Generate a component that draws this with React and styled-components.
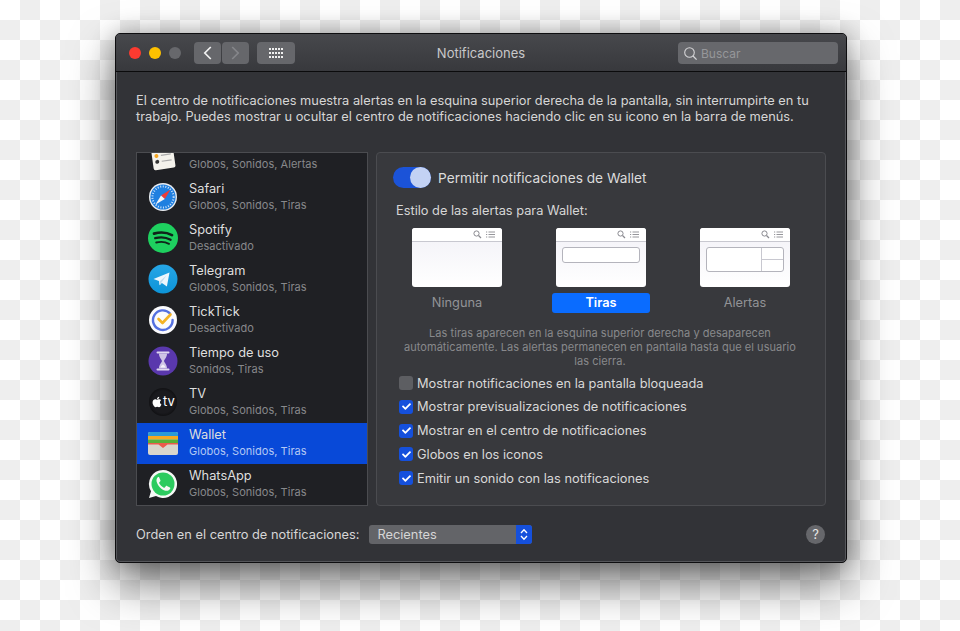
import styled, { createGlobalStyle } from "styled-components";
import { FaApple, FaCheck } from "react-icons/fa";

const GlobalStyle = createGlobalStyle`
	html, body {
		margin: 0;
		height: 631px;
		overflow: hidden;
	}
	body {
		font-family: Inter, "Noto Sans", sans-serif;
		background: conic-gradient(#eeeeee 25%, #ffffff 0 50%, #eeeeee 0 75%, #ffffff 0) 0 0 / 40px 40px;
		-webkit-font-smoothing: antialiased;
	}
`;

function RemindersIcon() {
	return (
		<svg width="32" height="32" viewBox="0 0 32 32">
			<g transform="rotate(-8 16 16)">
				<rect x="5" y="3" width="22" height="26" rx="2" fill="#f4f2ec" />
				<circle cx="9.5" cy="9" r="2" fill="#e8392f" />
				<circle cx="9.5" cy="15" r="2" fill="#f5a623" />
				<circle cx="9.5" cy="21" r="2" fill="#333" />
				<path d="M14 9h10M14 15h10M14 21h10" stroke="#aaa" strokeWidth="1.2" />
			</g>
		</svg>
	);
}

function SafariIcon() {
	return (
		<svg width="32" height="32" viewBox="0 0 32 32">
			<circle cx="16" cy="16" r="14" fill="#e9edf2" />
			<circle cx="16" cy="16" r="12.6" fill="#1f7fe0" />
			<circle cx="16" cy="16" r="10.6" fill="none" stroke="#cfe4fa" strokeWidth="2" strokeDasharray="1 1.6" />
			<path d="M23.5 8.500l-9.500 6 3.800 3.500z" fill="#ef3b36" />
			<path d="M8.500 23.500l9.300-5.500-3.800-3.500z" fill="#f2f4f7" />
		</svg>
	);
}

function SpotifyIcon() {
	return (
		<svg width="32" height="32" viewBox="0 0 32 32">
			<circle cx="16" cy="16" r="15" fill="#1ed05f" />
			<g fill="none" stroke="#10231a" strokeLinecap="round">
				<path d="M7 11.6c6-1.7 13-1.2 18 1.5" strokeWidth="2.7" />
				<path d="M8.2 16.2c5.2-1.4 11-.9 15.4 1.5" strokeWidth="2.3" />
				<path d="M9.2 20.5c4.500-1.100 9.200-.7 12.800 1.300" strokeWidth="1.9" />
			</g>
		</svg>
	);
}

function TelegramIcon() {
	return (
		<svg width="32" height="32" viewBox="0 0 32 32">
			<defs>
				<linearGradient id="tg" x1="0" y1="0" x2="0" y2="1">
					<stop offset="0" stopColor="#26a6e6" />
					<stop offset="1" stopColor="#0d94d8" />
				</linearGradient>
			</defs>
			<circle cx="16" cy="16" r="14.5" fill="url(#tg)" />
			<path d="M6.5 16l16-6.5-2.600 14-5-3.600-2.400 2.400-.6-4.400z" fill="#eef7fd" />
			<path d="M12.500 18.400l7-6-5 7.200-1.400 2.300z" fill="#c4dcec" />
		</svg>
	);
}

function TickTickIcon() {
	return (
		<svg width="32" height="32" viewBox="0 0 32 32">
			<circle cx="16" cy="16" r="14" fill="#fbfbfd" />
			<path d="M23 9.500A9.800 9.800 0 1 0 25.600 16" fill="none" stroke="#5470e0" strokeWidth="2.400" strokeLinecap="round" />
			<path d="M11.500 15l4 4 8-8.500" fill="none" stroke="#f4b324" strokeWidth="2.600" strokeLinecap="round" strokeLinejoin="round" />
		</svg>
	);
}

function HourglassIcon() {
	return (
		<svg width="32" height="32" viewBox="0 0 32 32">
			<circle cx="16" cy="16" r="14.500" fill="#5a38ad" />
			<path d="M10.500 7.500h11M10.500 24.500h11" stroke="#e0d8f0" strokeWidth="2" strokeLinecap="round" />
			<path d="M12 8.500h8c0 4-2.400 5.500-3 7.500.6 2 3 3.500 3 7.500h-8c0-4 2.400-5.500 3-7.500-.6-2-3-3.500-3-7.500z" fill="#cfc4e6" />
			<path d="M13.500 22.500c.8-2 1.700-2.500 2.500-3 .8.500 1.700 1 2.500 3z" fill="#f4f0fa" />
		</svg>
	);
}

function WalletIcon() {
	return (
		<svg width="32" height="32" viewBox="0 0 32 32">
			<rect x="1" y="5" width="30" height="23" rx="2" fill="#d9d6cc" />
			<path d="M1 7a2 2 0 0 1 2-2h26a2 2 0 0 1 2 2v2H1z" fill="#2b9ad6" />
			<rect x="1" y="9" width="30" height="3.500" fill="#f5a921" />
			<rect x="1" y="12.500" width="30" height="3.500" fill="#58b038" />
			<path d="M1 16h30v1.500H20.500L16 21l-4.500-3.500H1z" fill="#ec5b4b" />
		</svg>
	);
}

function WhatsAppIcon() {
	return (
		<svg width="32" height="32" viewBox="0 0 32 32">
			<path d="M16 2a14 14 0 0 0-12 21.200L2 30l7-1.900A14 14 0 1 0 16 2z" fill="#f6f8f6" />
			<circle cx="16" cy="16" r="11.500" fill="#2ccb5f" />
			<path d="M11.500 8.800c-1.500 1-2.400 2.600-1.900 4.700 1 4.200 4.800 8.200 8.800 9.200 2.200.5 4-.5 4.800-2 .3-.6.200-1-.3-1.300l-3-1.500c-.5-.2-.8-.1-1.100.3l-1 1.300c-.3.300-.6.400-1 .2-2-.9-3.700-2.500-4.600-4.400-.2-.4-.1-.7.200-1l.9-1c.3-.4.3-.7.100-1.100l-1.300-3c-.2-.5-.9-.7-1.600-.4z" fill="#f6f8f6" />
		</svg>
	);
}

function TvIcon() {
	return (
		<TvBadge>
			<FaApple size={12} />
			<span>tv</span>
		</TvBadge>
	);
}

const apps = [
	{ id: "reminders", detail: "Globos, Sonidos, Alertas", Icon: RemindersIcon },
	{ id: "safari", name: "Safari", detail: "Globos, Sonidos, Tiras", Icon: SafariIcon },
	{ id: "spotify", name: "Spotify", detail: "Desactivado", Icon: SpotifyIcon },
	{ id: "telegram", name: "Telegram", detail: "Globos, Sonidos, Tiras", Icon: TelegramIcon },
	{ id: "ticktick", name: "TickTick", detail: "Desactivado", Icon: TickTickIcon },
	{ id: "screentime", name: "Tiempo de uso", detail: "Sonidos, Tiras", Icon: HourglassIcon },
	{ id: "tv", name: "TV", detail: "Globos, Sonidos, Tiras", Icon: TvIcon },
	{ id: "wallet", name: "Wallet", detail: "Globos, Sonidos, Tiras", Icon: WalletIcon, selected: true },
	{ id: "whatsapp", name: "WhatsApp", detail: "Globos, Sonidos, Tiras", Icon: WhatsAppIcon },
];

const options = [
	{ label: "Mostrar notificaciones en la pantalla bloqueada", checked: false },
	{ label: "Mostrar previsualizaciones de notificaciones", checked: true },
	{ label: "Mostrar en el centro de notificaciones", checked: true },
	{ label: "Globos en los iconos", checked: true },
	{ label: "Emitir un sonido con las notificaciones", checked: true },
];

function Thumb({ kind }) {
	return (
		<ThumbBox>
			<ThumbBar>
				<svg width="24" height="9" viewBox="0 0 24 9">
					<circle cx="3.500" cy="3.500" r="2.600" fill="none" stroke="#8a8a90" strokeWidth="1" />
					<path d="M5.500 5.500L8 8" stroke="#8a8a90" strokeWidth="1.200" />
					<path d="M13 2h1.200M13 4.500h1.200M13 7h1.200M15.500 2H22M15.500 4.500H22M15.500 7H22" stroke="#8a8a90" strokeWidth="0.900" />
				</svg>
			</ThumbBar>
			{kind === "banner" && <Banner />}
			{kind === "alert" && (
				<AlertBox>
					<AlertMain />
					<AlertSide>
						<AlertAction />
						<AlertAction />
					</AlertSide>
				</AlertBox>
			)}
		</ThumbBox>
	);
}

export default function App() {
	return (
		<>
			<GlobalStyle />
			<Window>
				<TitleBar>
					<Light $color="#fc3a30" />
					<Light $color="#fdc100" />
					<Light $color="#67686c" />
					<NavGroup>
						<ToolButton>
							<svg width="9" height="14" viewBox="0 0 9 14">
								<path d="M7.800 1L1.800 7l6 6" fill="none" stroke="#f2f2f2" strokeWidth="1.700" />
							</svg>
						</ToolButton>
						<ToolButton>
							<svg width="9" height="14" viewBox="0 0 9 14">
								<path d="M1.200 1l6 6-6 6" fill="none" stroke="#85868a" strokeWidth="1.700" />
							</svg>
						</ToolButton>
					</NavGroup>
					<GridButton>
						<GridDots>
							{Array.from({ length: 15 }).map((_, i) => (
								<i key={i} />
							))}
						</GridDots>
					</GridButton>
					<Title>Notificaciones</Title>
					<Search>
						<svg width="15" height="15" viewBox="0 0 15 15">
							<circle cx="6.500" cy="6.500" r="4.800" fill="none" stroke="#d4d4d6" strokeWidth="1.100" />
							<path d="M10 10l3.600 3.600" stroke="#d4d4d6" strokeWidth="1.300" />
						</svg>
						<span>Buscar</span>
					</Search>
				</TitleBar>

				<Content>
					<Intro>
						El centro de notificaciones muestra alertas en la esquina superior derecha de la pantalla, sin
						interrumpirte en tu trabajo. Puedes mostrar u ocultar el centro de notificaciones haciendo clic en su
						icono en la barra de menús.
					</Intro>

					<Columns>
						<AppList>
							<AppScroll>
								{apps.map(({ id, name, detail, Icon, selected }) => (
									<AppRow key={id} $selected={selected}>
										<IconSlot>
											<Icon />
										</IconSlot>
										<AppText>
											<AppName>{name}</AppName>
											<AppDetail $selected={selected}>{detail}</AppDetail>
										</AppText>
									</AppRow>
								))}
							</AppScroll>
						</AppList>

						<Panel>
							<AllowRow>
								<Toggle />
								<AllowLabel>Permitir notificaciones de Wallet</AllowLabel>
							</AllowRow>
							<StyleHeading>Estilo de las alertas para Wallet:</StyleHeading>
							<Styles>
								<StyleOption>
									<Thumb />
									<StyleLabel>Ninguna</StyleLabel>
								</StyleOption>
								<StyleOption>
									<Thumb kind="banner" />
									<StyleLabel $active>Tiras</StyleLabel>
								</StyleOption>
								<StyleOption>
									<Thumb kind="alert" />
									<StyleLabel>Alertas</StyleLabel>
								</StyleOption>
							</Styles>
							<Hint>
								Las tiras aparecen en la esquina superior derecha y desaparecen automáticamente. Las alertas
								permanecen en pantalla hasta que el usuario las cierra.
							</Hint>
							<OptionList>
								{options.map((option) => (
									<OptionRow key={option.label}>
										<CheckBox $checked={option.checked}>
											{option.checked && <FaCheck size={9} color="#fff" />}
										</CheckBox>
										{option.label}
									</OptionRow>
								))}
							</OptionList>
						</Panel>
					</Columns>

					<Footer>
						<span>Orden en el centro de notificaciones:</span>
						<Select>
							<span>Recientes</span>
							<SelectCap>
								<svg width="8" height="13" viewBox="0 0 8 13">
									<path d="M1 5l3-3.200L7 5M1 8l3 3.200L7 8" fill="none" stroke="#fff" strokeWidth="1.300" />
								</svg>
							</SelectCap>
						</Select>
						<HelpButton>?</HelpButton>
					</Footer>
				</Content>
			</Window>
		</>
	);
}

const Window = styled.div`
	box-sizing: border-box;
	width: 732px;
	height: 530px;
	margin: 33px 0 0 115px;
	display: flex;
	flex-direction: column;
	background: #323337;
	border-radius: 5px;
	border: 1px solid #0e0e10;
	box-shadow: inset 0 0 0 1px #55565a, 0 20px 45px rgba(0, 0, 0, 0.55), 0 0 22px rgba(0, 0, 0, 0.25);
	color: #dcdcdc;
	overflow: hidden;
`;

const TitleBar = styled.div`
	flex: none;
	box-sizing: border-box;
	height: 38px;
	display: flex;
	align-items: center;
	padding: 1px 8px 0 13px;
	background: linear-gradient(#47484c, #38393d);
	border-bottom: 1px solid #0b0b0c;
	position: relative;
`;

const Light = styled.span`
	width: 12px;
	height: 12px;
	border-radius: 50%;
	background: ${(p) => p.$color};
	margin-right: 8px;
`;

const NavGroup = styled.div`
	display: flex;
	gap: 1px;
	margin-left: 5px;
`;

const ToolButton = styled.div`
	width: 27px;
	height: 22px;
	display: flex;
	align-items: center;
	justify-content: center;
	background: #66676b;
	border-radius: 4px;
`;

const GridButton = styled(ToolButton)`
	width: 38px;
	margin-left: 8px;
`;

const GridDots = styled.div`
	display: grid;
	grid-template-columns: repeat(5, 2px);
	column-gap: 1px;
	row-gap: 2px;

	i {
		width: 2px;
		height: 2px;
		background: #f0f0f0;
	}
`;

const Title = styled.div`
	position: absolute;
	left: 0;
	right: 0;
	text-align: center;
	font-size: 13px;
	color: #c8c8ca;
	pointer-events: none;
`;

const Search = styled.div`
	width: 160px;
	height: 22px;
	margin-left: auto;
	box-sizing: border-box;
	padding-left: 5px;
	display: flex;
	align-items: center;
	gap: 3px;
	background: #67686c;
	border-radius: 4px;
	font-size: 12px;
	color: #96979a;
`;

const Content = styled.div`
	flex: 1;
	min-height: 0;
	display: flex;
	flex-direction: column;
	padding: 21px 20px 0;
`;

const Intro = styled.p`
	margin: 0;
	height: 59px;
	font-size: 12.800px;
	line-height: 16px;
	color: #d6d6d6;
`;

const Columns = styled.div`
	display: flex;
	gap: 8px;
`;

const AppList = styled.div`
	box-sizing: border-box;
	width: 232px;
	height: 354px;
	background: #1f2024;
	border: 1px solid #4b4c50;
	overflow: hidden;
`;

const AppScroll = styled.div`
	margin-top: -17px;
`;

const AppRow = styled.div`
	box-sizing: border-box;
	height: 41px;
	padding-bottom: 2px;
	display: flex;
	align-items: center;
	background: ${(p) => (p.$selected ? "#0849d8" : "transparent")};
`;

const IconSlot = styled.div`
	width: 32px;
	height: 32px;
	margin-left: 10px;
	flex: none;
	display: flex;
`;

const TvBadge = styled.div`
	width: 28px;
	height: 28px;
	margin: 2px;
	border-radius: 50%;
	background: radial-gradient(circle, #1a1a1e 55%, #000);
	display: flex;
	align-items: center;
	justify-content: center;
	color: #fff;
	font-size: 13px;
	font-weight: 400;

	span {
		line-height: 1;
	}
`;

const AppText = styled.div`
	margin-left: 10px;
	display: flex;
	flex-direction: column;
`;

const AppName = styled.div`
	min-height: 17px;
	font-size: 12.800px;
	line-height: 17px;
	color: #dedede;
`;

const AppDetail = styled.div`
	font-size: 11px;
	letter-spacing: 0.03px;
	line-height: 16px;
	color: ${(p) => (p.$selected ? "#b3c8f4" : "#87888b")};
`;

const Panel = styled.div`
	box-sizing: border-box;
	width: 450px;
	height: 354px;
	padding: 14px 16px 0 16px;
	background: #38393d;
	border: 1px solid #4b4c50;
	border-radius: 4px;
`;

const AllowRow = styled.div`
	display: flex;
	align-items: center;
	gap: 7px;
	font-size: 13.700px;
`;

const AllowLabel = styled.span`
	color: #dcdcdc;
`;

const Toggle = styled.div`
	width: 38px;
	height: 21px;
	border-radius: 11px;
	background: #1b53d8;
	position: relative;

	&::after {
		content: "";
		position: absolute;
		right: 0;
		top: 0;
		width: 21px;
		height: 21px;
		border-radius: 50%;
		background: #c3d2f4;
	}
`;

const StyleHeading = styled.div`
	margin: 13px 0 0 3px;
	height: 20px;
	font-size: 12.800px;
	line-height: 20px;
	color: #d6d6d6;
`;

const Styles = styled.div`
	display: grid;
	grid-template-columns: repeat(3, 98px);
	gap: 46px;
	margin-left: 15px;
	margin-top: 7px;
`;

const StyleOption = styled.div`
	display: flex;
	flex-direction: column;
	align-items: center;
`;

const ThumbBox = styled.div`
	box-sizing: border-box;
	width: 90px;
	height: 59px;
	background: linear-gradient(#f2f1f7, #ffffff);
	border-radius: 3px;
	overflow: hidden;
`;

const ThumbBar = styled.div`
	box-sizing: border-box;
	height: 14px;
	background: #fff;
	border-bottom: 1px solid #c8c8d0;
	display: flex;
	justify-content: flex-end;
	align-items: center;
	padding-right: 5px;
`;

const Banner = styled.div`
	box-sizing: border-box;
	height: 16px;
	margin: 5px 6px 0;
	background: #fff;
	border: 1px solid #b4b4bc;
	border-radius: 3px;
`;

const AlertBox = styled.div`
	box-sizing: border-box;
	height: 25px;
	margin: 5px 6px 0;
	display: flex;
	background: #fff;
	border: 1px solid #b4b4bc;
	border-radius: 3px;
`;

const AlertMain = styled.div`
	flex: 1;
	border-right: 1px solid #c8c8d0;
`;

const AlertSide = styled.div`
	width: 21px;
	display: flex;
	flex-direction: column;
`;

const AlertAction = styled.div`
	flex: 1;

	& + & {
		border-top: 1px solid #c8c8d0;
	}
`;

const StyleLabel = styled.div`
	align-self: stretch;
	height: 20px;
	margin-top: 6px;
	text-align: center;
	line-height: 19px;
	font-size: 12.800px;
	border-radius: 3px;
	color: ${(p) => (p.$active ? "#ffffff" : "#929396")};
	font-weight: ${(p) => (p.$active ? 600 : 400)};
	background: ${(p) => (p.$active ? "#0a6cff" : "transparent")};
`;

const Hint = styled.p`
	width: 400px;
	margin: 13px 0 0 7px;
	font-size: 11px;
	letter-spacing: 0.04px;
	line-height: 14px;
	text-align: center;
	color: #88898c;
`;

const OptionList = styled.div`
	margin: 3.300px 0 0 6px;
	display: flex;
	flex-direction: column;
`;

const OptionRow = styled.div`
	height: 23.750px;
	display: flex;
	align-items: center;
	gap: 4px;
	font-size: 12.800px;
	color: #d8d8d8;
`;

const CheckBox = styled.span`
	box-sizing: border-box;
	width: 14px;
	height: 14px;
	border-radius: 3px;
	display: flex;
	align-items: center;
	justify-content: center;
	background: ${(p) => (p.$checked ? "#1550dc" : "#5d5e62")};
`;

const Footer = styled.div`
	display: flex;
	align-items: center;
	height: 56px;
	font-size: 12.800px;
	color: #d6d6d6;
`;

const Select = styled.div`
	width: 163px;
	height: 19px;
	margin-left: 10px;
	padding-left: 8px;
	box-sizing: border-box;
	display: flex;
	align-items: center;
	justify-content: space-between;
	background: #636468;
	border-radius: 3px;
	overflow: hidden;
`;

const SelectCap = styled.span`
	width: 16px;
	height: 100%;
	display: flex;
	align-items: center;
	justify-content: center;
	background: #1550dc;
`;

const HelpButton = styled.span`
	width: 19px;
	height: 19px;
	margin-left: auto;
	margin-right: 1px;
	border-radius: 50%;
	display: flex;
	align-items: center;
	justify-content: center;
	background: #66676b;
	color: #e8e8e8;
	font-size: 13px;
`;
